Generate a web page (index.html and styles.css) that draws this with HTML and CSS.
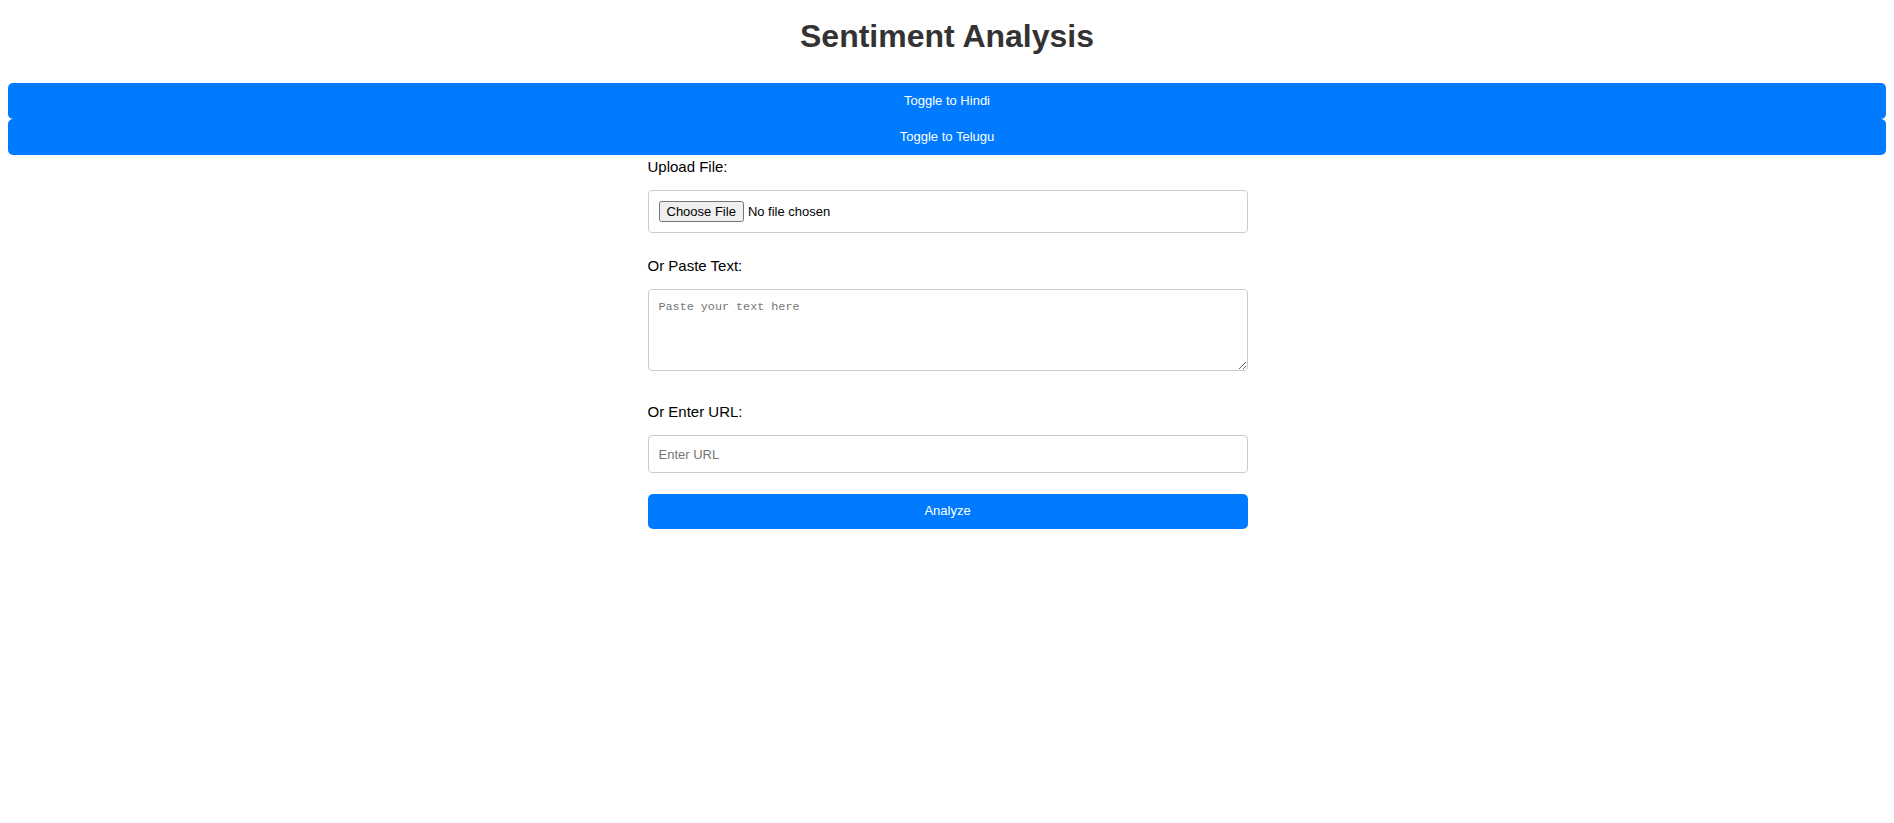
FILE: index.html
```html
<!DOCTYPE html>
<html lang="en">
<head>
<meta charset="utf-8">
<title>Sentiment Analysis</title>
<link rel="stylesheet" href="styles.css">
</head>
<body>
  <h1 class="title">Sentiment Analysis</h1>
  <div class="toggles">
    <button class="btn" type="button">Toggle to Hindi</button>
    <button class="btn" type="button">Toggle to Telugu</button>
  </div>
  <form class="form">
    <div class="group">
      <label class="label" for="file">Upload File:</label>
      <input class="field file-field" id="file" type="file">
    </div>
    <div class="group group-text">
      <label class="label" for="text">Or Paste Text:</label>
      <textarea class="field text-field" id="text" placeholder="Paste your text here"></textarea>
    </div>
    <div class="group group-url">
      <label class="label" for="url">Or Enter URL:</label>
      <input class="field url-field" id="url" type="text" placeholder="Enter URL">
    </div>
    <button class="btn analyze" type="button">Analyze</button>
  </form>
</body>
</html>
```

FILE: styles.css
```css
html, body {
  background: #ffffff;
}

body {
  margin: 0 8px 8px;
  padding-top: 18px;
  font-family: "Liberation Sans", Arial, sans-serif;
  color: #000;
}

.title {
  margin: 0 0 28px;
  font-size: 32px;
  font-weight: bold;
  color: #333333;
  text-align: center;
  line-height: normal;
}

.toggles {
  display: flex;
  flex-direction: column;
}

.btn {
  display: block;
  width: 100%;
  margin: 0;
  padding: 10px;
  border: none;
  border-radius: 5px;
  background: #007bff;
  color: #ffffff;
  font-family: "Liberation Sans", Arial, sans-serif;
  font-size: 13px;
  line-height: 16px;
  text-align: center;
  cursor: pointer;
}

.form {
  width: 600px;
  margin: 3px auto 0;
  padding-left: 1px;
  display: flex;
  flex-direction: column;
}

.group {
  display: flex;
  flex-direction: column;
  margin-bottom: 24px;
}

.group-text {
  margin-bottom: 32px;
}

.group-url {
  margin-bottom: 21px;
}

.label {
  display: block;
  font-size: 15px;
  line-height: normal;
  color: #000;
  margin-bottom: 15px;
}

.field {
  display: block;
  width: 100%;
  box-sizing: border-box;
  margin: 0;
  padding: 10px;
  border: 1px solid #cccccc;
  border-radius: 4px;
  background: #fff;
  font-family: "Liberation Sans", Arial, sans-serif;
  font-size: 13px;
}

.file-field {
  height: 43px;
}

.text-field {
  height: 82px;
  font-family: "Liberation Mono", monospace;
  font-size: 11.75px;
  resize: both;
}

.url-field {
  height: 38px;
  line-height: 15px;
}

.field::placeholder {
  color: #757575;
}

.analyze {
  padding: 9px 10px 10px;
}
```
